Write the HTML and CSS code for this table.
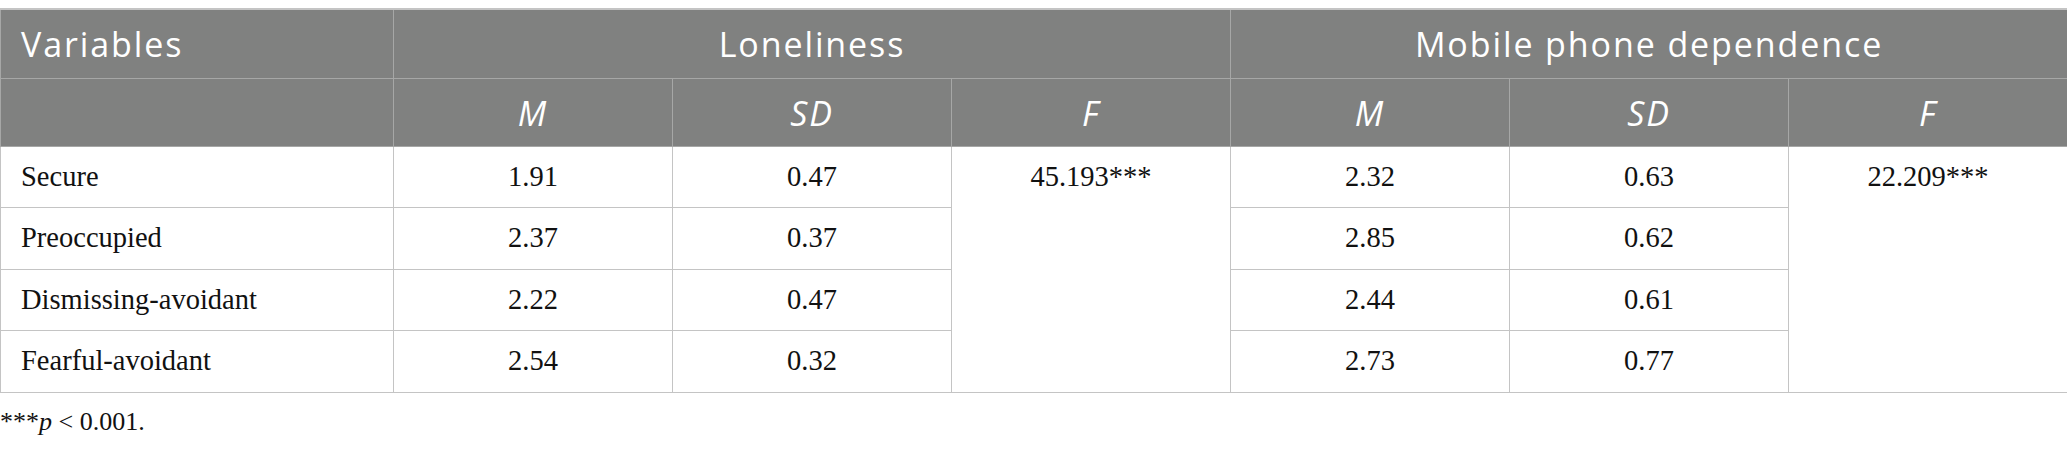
FILE: index.html
```html
<!DOCTYPE html>
<html>
<head>
<meta charset="utf-8">
<link rel="stylesheet" href="styles.css">
</head>
<body>
<table class="data">
  <colgroup>
    <col class="c-var">
    <col class="c-num"><col class="c-num"><col class="c-num">
    <col class="c-num"><col class="c-num"><col class="c-num">
  </colgroup>
  <thead>
    <tr class="h1">
      <th class="left">Variables</th>
      <th colspan="3">Loneliness</th>
      <th colspan="3">Mobile phone dependence</th>
    </tr>
    <tr class="h2">
      <th></th>
      <th><i>M</i></th><th><i>SD</i></th><th><i>F</i></th>
      <th><i>M</i></th><th><i>SD</i></th><th><i>F</i></th>
    </tr>
  </thead>
  <tbody>
    <tr>
      <td class="left">Secure</td><td>1.91</td><td>0.47</td><td rowspan="4">45.193***</td>
      <td>2.32</td><td>0.63</td><td rowspan="4">22.209***</td>
    </tr>
    <tr>
      <td class="left">Preoccupied</td><td>2.37</td><td>0.37</td>
      <td>2.85</td><td>0.62</td>
    </tr>
    <tr>
      <td class="left">Dismissing-avoidant</td><td>2.22</td><td>0.47</td>
      <td>2.44</td><td>0.61</td>
    </tr>
    <tr>
      <td class="left">Fearful-avoidant</td><td>2.54</td><td>0.32</td>
      <td>2.73</td><td>0.77</td>
    </tr>
  </tbody>
</table>
<p class="note">***<i>p</i> &lt; 0.001.</p>
</body>
</html>
```
FILE: styles.css
```css
html, body {
  margin: 0;
  padding: 0;
  background: #ffffff;
}
body {
  padding-top: 8px;
}
.data {
  width: 2067px;
  table-layout: fixed;
  border-collapse: collapse;
  font-family: "Liberation Serif", "Times New Roman", serif;
}
.c-var { width: 393px; }
.c-num { width: 279px; }
.data th {
  background: #808180;
  color: #ffffff;
  font-family: "Open Sans", "Noto Sans", sans-serif;
  font-weight: 380;
  font-size: 34px;
  letter-spacing: 1.9px;
  text-align: center;
  border: 1px solid #a6a7a6;
  padding: 0 20px;
  line-height: 40px;
}
.data thead tr:first-child th {
  border-top: 2px solid #c4c4c4;
}
.data .h1 th { height: 68px; }
.data .h2 th { height: 67px; }
.data th i { font-style: italic; }
.data th.left, .data td.left { text-align: left; }
.data td {
  border: 1px solid #c4c4c4;
  color: #111111;
  font-size: 28.5px;
  text-align: center;
  vertical-align: top;
  padding: 15px 20px 0 20px;
  height: 45.4px;
  line-height: 30px;
}
.data th.left { padding-left: 20px; }
.note {
  margin: 14px 0 0 0;
  font-family: "Liberation Serif", "Times New Roman", serif;
  font-size: 26px;
  color: #111111;
  line-height: 30px;
}
```
